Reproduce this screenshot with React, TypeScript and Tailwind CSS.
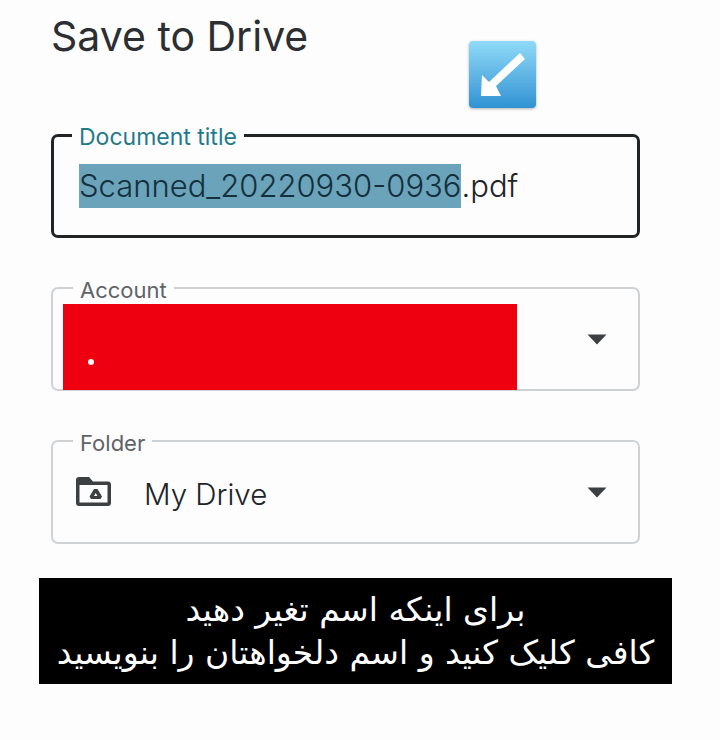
import React from 'react';

const Caret = () => (
  <svg width="20" height="11" viewBox="0 0 20 11" className="block">
    <path d="M0.5 0.5H19.5L10 10.5Z" fill="#3c4043" />
  </svg>
);

const FolderDrive = () => (
  <svg width="35" height="29" viewBox="0 0 35 29" className="block">
    <path
      fillRule="evenodd"
      fill="#3c4043"
      d="M3 0H13L17 4.5H32C33.7 4.5 35 5.8 35 7.5V26C35 27.7 33.7 29 32 29H3C1.3 29 0 27.7 0 26V3C0 1.3 1.3 0 3 0ZM3.5 8V25.5H31.5V8Z"
    />
    <path fill="#3c4043" fillRule="evenodd" d="M18 12H21.5L26 19.5L24.5 22H15L13.5 19.5ZM19.7 16L18 19H21.5Z" />
  </svg>
);

const Field: React.FC<{ label: string; active?: boolean; className?: string; children: React.ReactNode }> = ({
  label,
  active,
  className,
  children,
}) => (
  <fieldset
    className={`h-[104px] w-[589px] rounded-[7px] ${active ? 'border-[3px] border-[#202427]' : 'border-2 border-[#cfd2d5]'} ${className ?? ''}`}
  >
    <legend
      className={`px-[7px] ${active ? 'ml-[18px] text-[23px] leading-[3px] text-[#1f7a8c]' : 'ml-[20px] text-[22px] leading-[2px] text-[#5f6368]'}`}
    >
      <span className="relative top-[2px]">{label}</span>
    </legend>
    {children}
  </fieldset>
);

export default function App() {
  return (
    <div className="relative h-[740px] w-[720px] overflow-hidden bg-[#fdfdfe] font-['Inter',sans-serif]">
      <div className="flex h-[134px] pl-[51px]">
        <h1 className="mt-[13px] h-fit w-[418px] text-[41px] leading-[47px] font-normal text-[#2c2f32]">Save to Drive</h1>
        <div className="mt-[41px] h-[67px] w-[67px] rounded-[4px] bg-gradient-to-b from-[#8fdbf7] to-[#2f92d3] shadow-[0_1px_3px_rgba(0,0,0,0.3)]">
          <svg width="67" height="67" viewBox="0 0 67 67" className="block">
            <path fill="#ffffff" d="M51 12L56 18L27 45L32 55H12L13 34L20 41Z" />
          </svg>
        </div>
      </div>

      <div className="flex flex-col pl-[51px]">
        <Field label="Document title" active>
          <div className="mt-[27px] ml-[25px] text-[31px] leading-[44px] font-light whitespace-nowrap text-[#202427]">
            <span className="inline-block bg-[#6ba3bb] text-[#14303d]">Scanned_20220930-0936</span>.pdf
          </div>
        </Field>

        <Field label="Account" className="mt-[49px]">
          <div className="mt-[45px] flex justify-end pr-[31px]">
            <Caret />
          </div>
        </Field>

        <Field label="Folder" className="mt-[49px]">
          <div className="mt-[35px] flex items-start pr-[31px] pl-[23px]">
            <FolderDrive />
            <span className="mt-[-3px] ml-[33px] text-[29.5px] leading-[40px] font-light text-[#202427]">My Drive</span>
            <span className="mt-[10px] ml-auto">
              <Caret />
            </span>
          </div>
        </Field>

        <div
          dir="rtl"
          className="mt-[34px] -ml-[12px] flex h-[106px] w-[633px] flex-col items-center justify-center bg-black text-center font-['DejaVu_Sans',sans-serif] text-[33px] leading-[43px] text-white"
        >
          <div>برای اینکه اسم تغیر دهید</div>
          <div className="whitespace-nowrap">کافی کلیک کنید و اسم دلخواهتان را بنویسید</div>
        </div>
      </div>

      <div className="absolute top-[304px] left-[63px] h-[86px] w-[454px] bg-[#ee0011]">
        <div className="absolute top-[55px] left-[25px] h-[6px] w-[6px] rounded-full bg-[#fff4f4]" />
      </div>
    </div>
  );
}
